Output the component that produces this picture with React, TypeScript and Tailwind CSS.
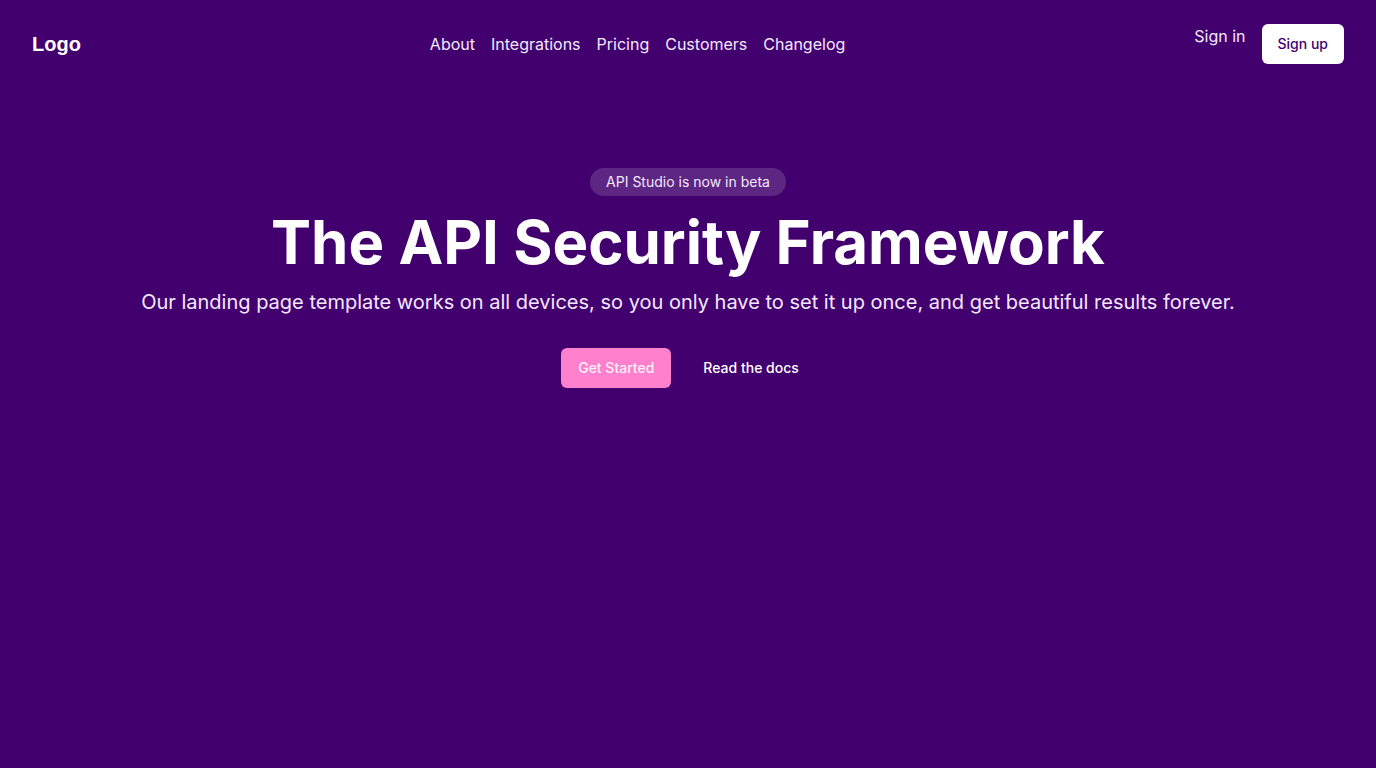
import React from "react";

export default function App() {
  return (
    <div
      className="min-h-[768px] w-full bg-[#42006e] text-white"
      style={{ fontFamily: "Inter, 'Noto Sans', sans-serif" }}
    >
      <header className="flex items-center justify-between px-8 py-6">
        <div
          className="text-[20px] font-bold leading-7 text-white"
          style={{ fontFamily: "'Liberation Sans', Arial, sans-serif" }}
        >
          Logo
        </div>
        <nav className="flex items-center gap-4 text-base text-[#f3e8ff]">
          <a href="#">About</a>
          <a href="#">Integrations</a>
          <a href="#">Pricing</a>
          <a href="#">Customers</a>
          <a href="#">Changelog</a>
        </nav>
        <div className="flex items-start gap-4">
          <a href="#" className="text-base leading-6 text-[#f3e8ff]">
            Sign in
          </a>
          <button className="h-10 rounded-md bg-white px-4 text-sm font-medium text-[#42006e]">
            Sign up
          </button>
        </div>
      </header>
      <main className="flex flex-col items-center pt-20 text-center">
        <div className="rounded-full bg-white/15 px-4 py-1 text-sm leading-5 text-[#f3e8ff]">
          API Studio is now in beta
        </div>
        <h1 className="mt-4 text-6xl font-bold leading-none text-white">
          The API Security Framework
        </h1>
        <p className="mt-4 text-xl leading-7 text-[#f3e8ff]">
          Our landing page template works on all devices, so you only have to set it up once, and get beautiful results forever.
        </p>
        <div className="mt-8 flex items-center gap-4">
          <button className="h-10 rounded-md bg-[#ff80cc] px-[17px] text-sm font-medium text-[#fdeefa]">
            Get Started
          </button>
          <button className="h-10 rounded-md px-4 text-sm font-medium text-white">
            Read the docs
          </button>
        </div>
      </main>
    </div>
  );
}
